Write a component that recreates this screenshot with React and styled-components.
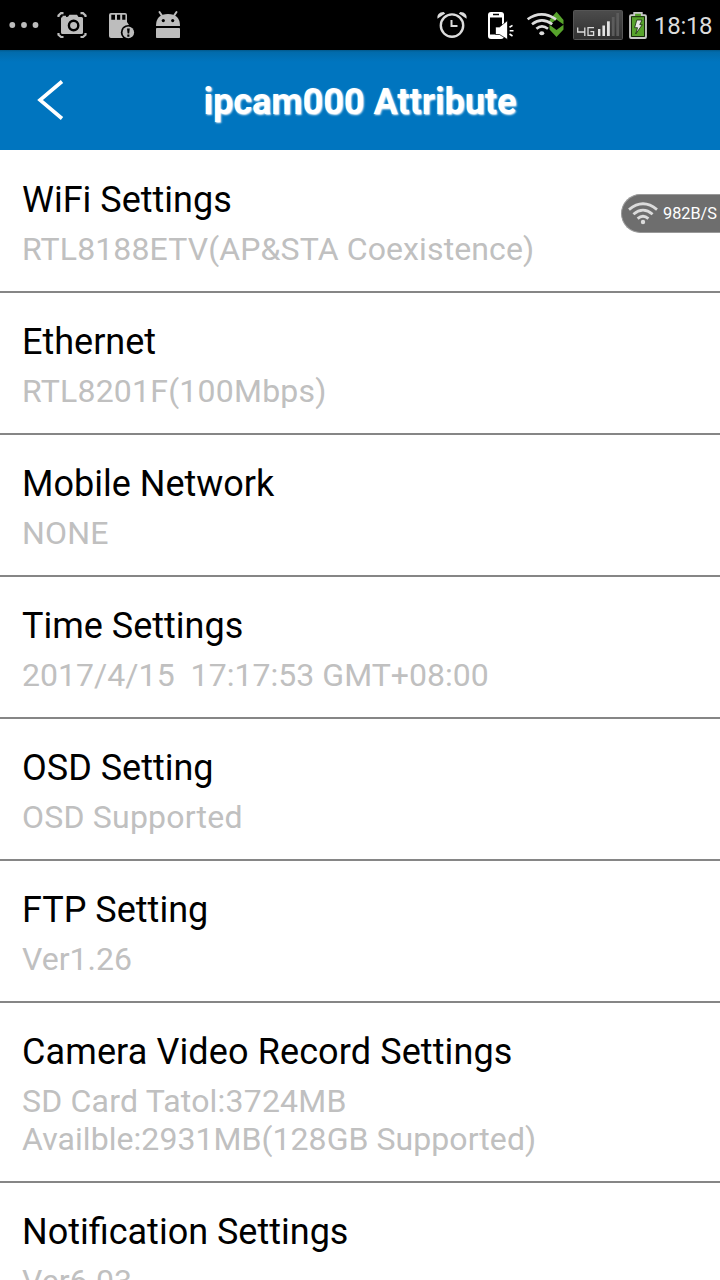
import React from 'react';
import styled, { createGlobalStyle } from 'styled-components';

const settings = [
  {
    title: 'WiFi Settings',
    lines: [{ text: 'RTL8188ETV(AP&STA Coexistence)', tracking: 0.12 }],
  },
  { title: 'Ethernet', lines: [{ text: 'RTL8201F(100Mbps)', tracking: 0.22 }] },
  { title: 'Mobile Network', lines: [{ text: 'NONE', tracking: 0.2 }] },
  {
    title: 'Time Settings',
    lines: [{ text: '2017/4/15  17:17:53 GMT+08:00', tracking: 0.04 }],
  },
  { title: 'OSD Setting', lines: [{ text: 'OSD Supported', tracking: 0.22 }] },
  { title: 'FTP Setting', lines: [{ text: 'Ver1.26' }] },
  {
    title: 'Camera Video Record Settings',
    tracking: 0.11,
    lines: [
      { text: 'SD Card Tatol:3724MB', tracking: 0.2 },
      { text: 'Availble:2931MB(128GB Supported)', tracking: 0.06 },
    ],
  },
  {
    title: 'Notification Settings',
    lines: [{ text: 'Ver6.03' }],
  },
];

const App = () => {
  return (
    <Screen>
      <GlobalStyle />
      <StatusBar>
        <NotificationIcons />
        <SystemIcons />
        <Clock>18:18</Clock>
      </StatusBar>
      <Header>
        <BackButton aria-label="Back">
          <svg width="32" height="44" viewBox="0 0 32 44">
            <path
              d="M28 3.5 L6 22 L28 40.5"
              fill="none"
              stroke="#fff"
              strokeWidth="3.6"
            />
          </svg>
        </BackButton>
        <HeaderTitle>ipcam000 Attribute</HeaderTitle>
      </Header>
      <List>
        {settings.map(({ title, tracking, lines }) => (
          <Item key={title}>
            <ItemTitle $tracking={tracking}>{title}</ItemTitle>
            {lines.map((line) => (
              <ItemText key={line.text} $tracking={line.tracking}>
                {line.text}
              </ItemText>
            ))}
          </Item>
        ))}
      </List>
      <SpeedBadge>
        <svg width="32" height="26" viewBox="0 0 32 26">
          <g fill="none" stroke="#dcdcdc" strokeWidth="2.8">
            <path d="M2 8.6 Q16 -3 30 8.6" />
            <path d="M6.4 13.2 Q16 5 25.6 13.2" />
            <path d="M10.6 17.6 Q16 13 21.4 17.6" />
          </g>
          <circle cx="16" cy="21" r="2.2" fill="#dcdcdc" />
        </svg>
        982B/S
      </SpeedBadge>
    </Screen>
  );
};

const NotificationIcons = () => (
  <svg width="200" height="50" viewBox="0 0 200 50">
    <g fill="#bdbdbd">
      <circle cx="12.3" cy="25" r="2.9" />
      <circle cx="24" cy="25" r="2.9" />
      <circle cx="35.5" cy="25" r="2.9" />
    </g>
    <g fill="none" stroke="#bdbdbd" strokeWidth="2.2">
      <path d="M58.5 17 V15.5 L61 13.2 H63.5" />
      <path d="M80.5 13.2 H83 L85.5 15.5 V17" />
      <path d="M58.5 33 V34.8 L61 37 H63.5" />
      <path d="M80.5 37 H83 L85.5 34.8 V33" />
    </g>
    <path
      d="M62.5 17 V15.8 H66 V17 L68 16.8 L69.5 14.8 H77 L78.5 17 H81.5 Q83 17 83 18.5 V32.5 Q83 34 81.5 34 H62.5 Q61 34 61 32.5 V18.5 Q61 17 62.5 17Z"
      fill="#bdbdbd"
    />
    <circle cx="73.6" cy="25.5" r="4.7" fill="#bdbdbd" stroke="#000" strokeWidth="2.4" />
    <path
      d="M111 13 H125 Q127 13 127 15 V22 L129 25 V35 Q129 38 126 38 H111 Q109 38 109 36 V15 Q109 13 111 13Z"
      fill="#bdbdbd"
    />
    <path d="M111.3 14.7h3.7v5h-3.7z M117 14.7h3.2v5H117z M122.2 14.7h3.2v5h-3.2z" fill="#000" />
    <circle cx="128.3" cy="32.4" r="7.5" fill="#000" />
    <circle cx="128.3" cy="32.4" r="5.8" fill="#bdbdbd" />
    <path d="M127 28.5h2.8l-.6 5h-1.6z M127.3 34.6h2.1v2.1h-2.1z" fill="#000" />
    <g fill="#bdbdbd">
      <path d="M156 26 Q156 14 168 14 Q180 14 180 26Z" />
      <rect x="156" y="28" width="24" height="10" rx="0.8" />
      <path d="M159.5 12 L162.5 16.5 M176.5 12 L173.5 16.5" stroke="#bdbdbd" strokeWidth="2" strokeLinecap="round" />
    </g>
    <circle cx="163.3" cy="20.6" r="1.6" fill="#000" />
    <circle cx="172.7" cy="20.6" r="1.6" fill="#000" />
  </svg>
);

const SystemIcons = () => (
  <SystemSvg width="220" height="50" viewBox="430 0 220 50">
    <defs>
      <linearGradient id="signalTile" x1="0" y1="0" x2="0" y2="1">
        <stop offset="0" stopColor="#4c4c4c" />
        <stop offset="1" stopColor="#303030" />
      </linearGradient>
    </defs>
    <g fill="none" stroke="#dcdcdc">
      <circle cx="452" cy="25.6" r="11.2" strokeWidth="2.4" />
      <path d="M451.5 20 V26 H457.5" strokeWidth="2" />
    </g>
    <path
      d="M437.4 18.8 Q436.6 12.4 443.6 12 L445.2 13.6 Z M466.6 18.8 Q467.4 12.4 460.4 12 L458.8 13.6 Z"
      fill="#dcdcdc"
    />
    <rect x="488" y="12" width="16" height="27" rx="3" fill="#fff" />
    <path d="M490 17.5h12v17h-12z M493 13.7h6v1.6h-6z" fill="#000" />
    <path d="M495.5 27 H499.5 L507.5 20.5 V39.5 L499.5 34.5 H495.5Z" fill="#fff" stroke="#000" strokeWidth="0.7" />
    <path d="M509.5 27.2 L512.5 25.4 M509.7 30.7 H513.5 M509.5 34 L512.5 36" stroke="#fff" strokeWidth="1.6" />
    <path
      d="M556.5 11.8 L563.5 20 V24.5 L556.5 19.5 L549.5 24.5 V20Z M556.5 37 L563.5 29.5 V24.8 L556.5 30 L549.5 24.8 V29.5Z"
      fill="#57a32c"
    />
    <g fill="none" stroke="#dcdcdc" strokeWidth="2.6">
      <path d="M527.6 19.3 Q541.5 9.5 556 19.3" />
      <path d="M532 24.2 Q541.8 16.5 552.2 24.2" />
      <path d="M536.4 28.8 Q541.8 24 548 28.8" />
    </g>
    <ellipse cx="541.8" cy="33.2" rx="2.5" ry="2" fill="#dcdcdc" />
    <rect x="573.5" y="10.5" width="49" height="29" rx="1" fill="url(#signalTile)" stroke="#555" />
    <g fill="none" stroke="#dcdcdc" strokeWidth="1.3">
      <path d="M577.7 27.5 V32 H584.8 M584.8 27.5 V36" />
      <path d="M594 27.6 H588 V35.4 H593.6 V31.6 H590.4" />
    </g>
    <g fill="#e2e2e2">
      <rect x="598" y="29" width="2.4" height="7" />
      <rect x="602.4" y="25.5" width="2.6" height="10.5" />
      <rect x="607" y="21.3" width="2.8" height="14.7" />
    </g>
    <rect x="611.8" y="17" width="2.8" height="19" fill="#5c5c5c" />
    <rect x="616.3" y="13" width="2.8" height="23" fill="#5c5c5c" />
    <path
      d="M634.2 15.2 V12.8 H641.8 V15.2 H645 Q646 15.2 646 16.2 V37 Q646 38 645 38 H631 Q630 38 630 37 V16.2 Q630 15.2 631 15.2Z"
      fill="#57a32c"
      stroke="#c9c9c9"
      strokeWidth="1.8"
    />
    <path d="M631.5 36.5 V16.7 H644.5 V36.5Z" fill="none" stroke="#17280d" strokeWidth="1" />
    <path d="M636.8 20 H642 L639.8 24.7 H642.3 L635.7 34 L637.5 27.7 H634.6Z" fill="#e8e8e8" stroke="#17280d" strokeWidth="0.8" />
  </SystemSvg>
);

const GlobalStyle = createGlobalStyle`
  * {
    box-sizing: border-box;
  }

  body {
    margin: 0;
    overflow: hidden;
    background-color: #fff;
    font-family: Roboto, sans-serif;
  }
`;

const Screen = styled.div`
  position: relative;
  display: flex;
  flex-direction: column;
  width: 720px;
  height: 1280px;
  overflow: hidden;
  background-color: #fff;
`;

const StatusBar = styled.div`
  display: flex;
  flex-shrink: 0;
  align-items: center;
  height: 50px;
  background-color: #000;
`;

const SystemSvg = styled.svg`
  margin-left: 230px;
`;

const Clock = styled.span`
  margin: 2px 0 0 4px;
  color: #dcdcdc;
  font-size: 24px;
  letter-spacing: -0.3px;
  line-height: 50px;
`;

const Header = styled.header`
  display: grid;
  flex-shrink: 0;
  grid-template-columns: 100px 1fr 100px;
  align-items: center;
  height: 100px;
  background: linear-gradient(#02598c 0, #026bab 2px, #0075bf 12px);
`;

const BackButton = styled.button`
  display: flex;
  justify-content: center;
  padding: 0;
  border: 0;
  background: none;
`;

const HeaderTitle = styled.h1`
  margin: 3px 0 0;
  color: #fff;
  font-size: 36px;
  font-weight: 700;
  line-height: 42px;
  text-align: center;
  text-shadow: 1px 1px 2px #fff;
  white-space: nowrap;
`;

const List = styled.ul`
  flex-shrink: 0;
  margin: 0;
  padding: 1px 0 0;
  list-style: none;
`;

const Item = styled.li`
  padding: 28px 22px 23px;
  border-bottom: 2px solid #868686;
`;

const ItemTitle = styled.h2`
  margin: 0 0 9px;
  color: #000;
  font-size: 36px;
  font-weight: 400;
  font-variant-ligatures: common-ligatures;
  letter-spacing: ${({ $tracking }) => ($tracking ? `${$tracking}px` : 'normal')};
  line-height: 42px;
`;

const ItemText = styled.p`
  margin: 0;
  color: #c0c0c0;
  font-size: 32px;
  letter-spacing: ${({ $tracking }) => ($tracking ? `${$tracking}px` : 'normal')};
  line-height: 38px;
  white-space: pre;
`;

const SpeedBadge = styled.div`
  position: absolute;
  top: 194px;
  right: 0;
  display: flex;
  align-items: center;
  gap: 4px;
  width: 99px;
  height: 39px;
  padding-left: 5px;
  border: 1px solid #999;
  border-right: 0;
  border-radius: 20px 0 0 20px;
  background-color: #6e6e6e;
  color: #fff;
  font-size: 16.3px;
  white-space: nowrap;
`;

export default App;
